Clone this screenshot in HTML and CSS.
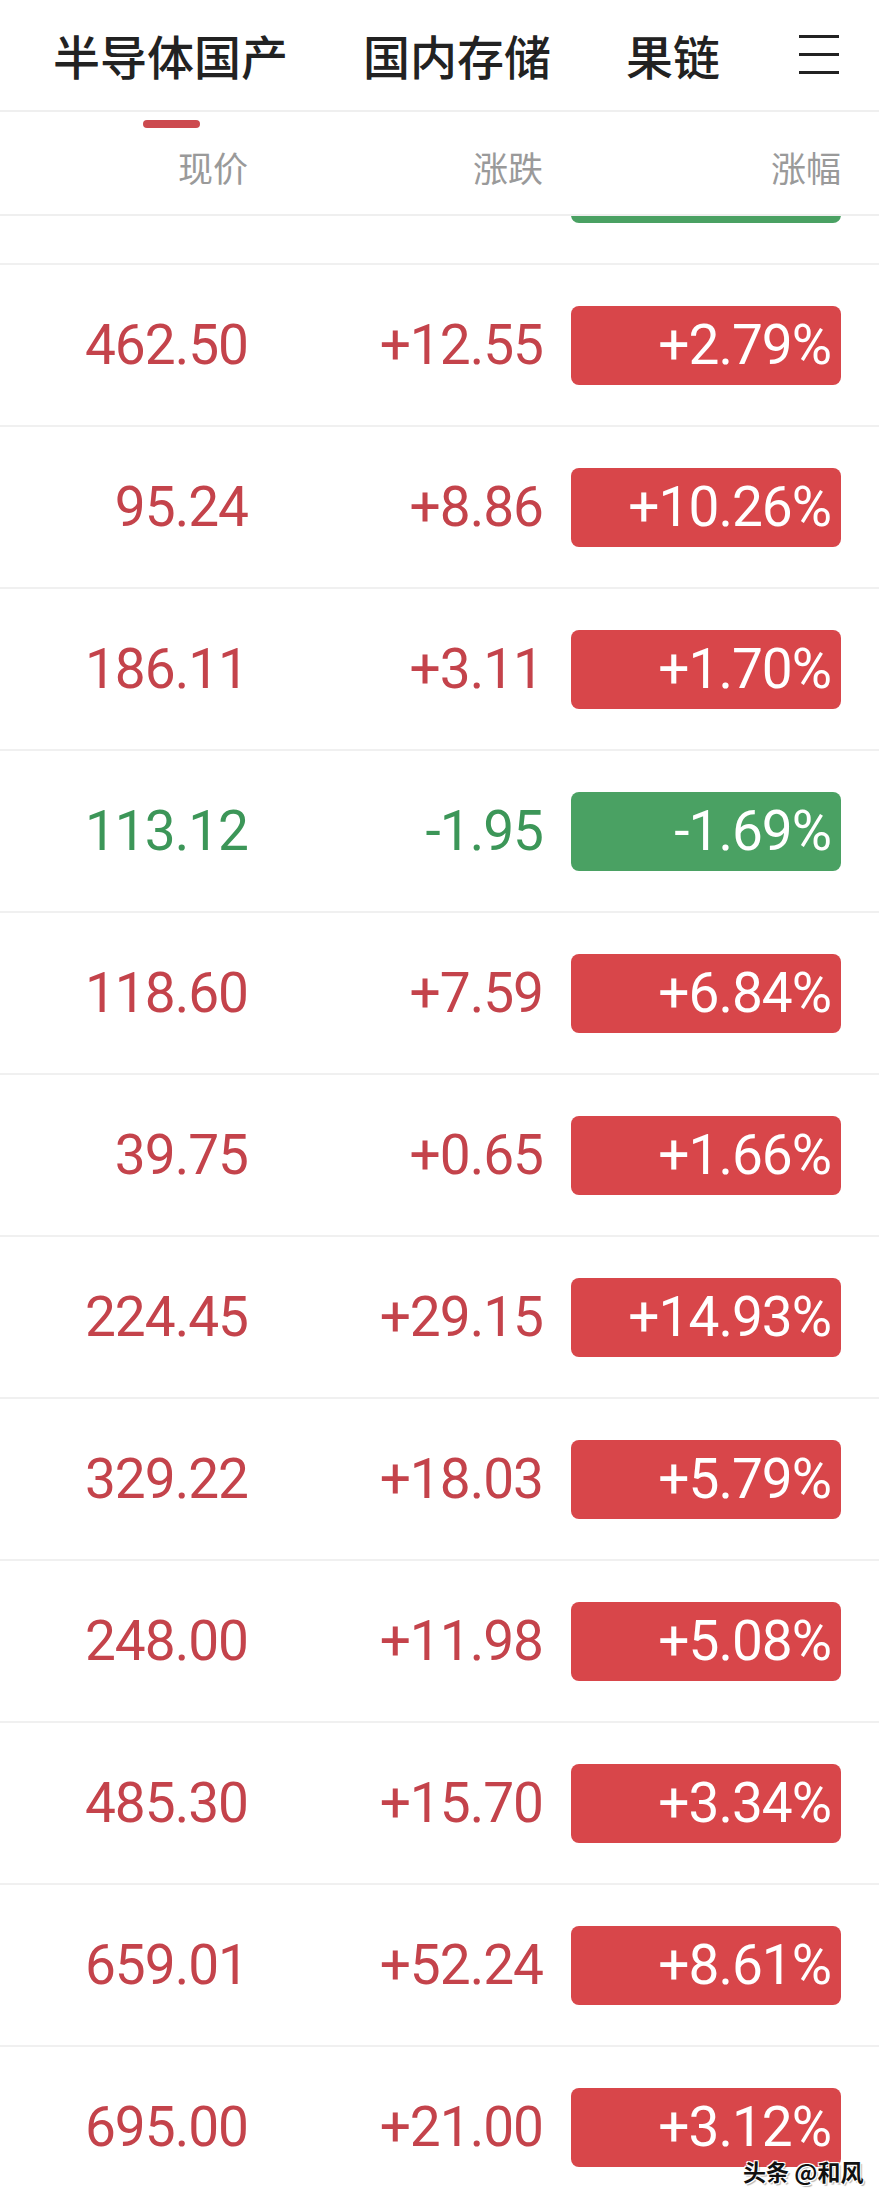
FILE: index.html
```html
<!DOCTYPE html>
<html lang="zh-CN">
<head>
<meta charset="utf-8">
<title>半导体国产</title>
<link rel="stylesheet" href="styles.css">
</head>
<body>
<div class="page">
  <nav class="tabs">
    <div class="tab active">半导体国产</div>
    <div class="tab">国内存储</div>
    <div class="tab">果链</div>
    <div class="menu">
      <svg width="40" height="42" viewBox="0 0 40 42"><rect x="0" y="2" width="40" height="3" fill="#222"/><rect x="0" y="20" width="40" height="3" fill="#222"/><rect x="0" y="38" width="40" height="3" fill="#222"/></svg>
    </div>
  </nav>
  <div class="head">
    <div class="hcell">现价</div>
    <div class="hcell">涨跌</div>
    <div class="hcell">涨幅</div>
  </div>
  <div class="clip">
    <div class="row down"><div class="price"></div><div class="chg"></div><div class="badge"></div></div>
  </div>
  <div class="list">
    <div class="row up"><div class="price">462.50</div><div class="chg">+12.55</div><div class="badge">+2.79%</div></div>
    <div class="row up"><div class="price">95.24</div><div class="chg">+8.86</div><div class="badge">+10.26%</div></div>
    <div class="row up"><div class="price">186.11</div><div class="chg">+3.11</div><div class="badge">+1.70%</div></div>
    <div class="row down"><div class="price">113.12</div><div class="chg">-1.95</div><div class="badge">-1.69%</div></div>
    <div class="row up"><div class="price">118.60</div><div class="chg">+7.59</div><div class="badge">+6.84%</div></div>
    <div class="row up"><div class="price">39.75</div><div class="chg">+0.65</div><div class="badge">+1.66%</div></div>
    <div class="row up"><div class="price">224.45</div><div class="chg">+29.15</div><div class="badge">+14.93%</div></div>
    <div class="row up"><div class="price">329.22</div><div class="chg">+18.03</div><div class="badge">+5.79%</div></div>
    <div class="row up"><div class="price">248.00</div><div class="chg">+11.98</div><div class="badge">+5.08%</div></div>
    <div class="row up"><div class="price">485.30</div><div class="chg">+15.70</div><div class="badge">+3.34%</div></div>
    <div class="row up"><div class="price">659.01</div><div class="chg">+52.24</div><div class="badge">+8.61%</div></div>
    <div class="row up"><div class="price">695.00</div><div class="chg">+21.00</div><div class="badge">+3.12%</div></div>
  </div>
  <div class="mark">头条 @和风</div>
</div>
</body>
</html>
```
FILE: styles.css
```css
* { box-sizing: border-box; }
html, body { margin: 0; padding: 0; background: #fff; }
body { width: 879px; height: 2205px; overflow: hidden; }
.page {
  position: relative;
  width: 879px;
  height: 2205px;
  overflow: hidden;
  font-family: "Noto Sans CJK SC", "Noto Sans", sans-serif;
}
.tabs {
  display: flex;
  align-items: center;
  gap: 75px;
  height: 112px;
  padding: 0 40px 2px 53px;
  border-bottom: 2px solid #efefef;
}
.tab {
  position: relative;
  font-size: 47px;
  font-weight: 500;
  line-height: 1;
  color: #222;
  white-space: nowrap;
}
.tab.active::after {
  content: "";
  position: absolute;
  left: 50%;
  bottom: -50px;
  width: 57px;
  height: 8px;
  margin-left: -28px;
  border-radius: 4px;
  background: #cc4a4f;
}
.menu { margin-left: auto; display: flex; align-items: center; }
.menu svg { display: block; }

.head, .row {
  display: grid;
  grid-template-columns: 248px 295px 1fr;
  padding-right: 38px;
}
.head {
  height: 104px;
  align-items: center;
  padding-top: 6px;
  border-bottom: 2px solid #efefef;
}
.hcell {
  text-align: right;
  font-size: 35px;
  line-height: 1;
  color: #9a9a9a;
}
.clip {
  height: 47px;
  overflow: hidden;
  display: flex;
  flex-direction: column;
  justify-content: flex-end;
}
.clip .row { flex: none; }
.row {
  height: 162px;
  align-items: center;
  border-top: 2px solid #f0f0f0;
  font-family: Roboto, "Liberation Sans", sans-serif;
  font-size: 55px;
  letter-spacing: -1px;
  line-height: 1;
}
.price, .chg { text-align: right; }
.badge {
  justify-self: end;
  width: 270px;
  height: 79px;
  border-radius: 8px;
  display: flex;
  align-items: center;
  justify-content: flex-end;
  padding-right: 10px;
  color: #fff;
}
.up .price, .up .chg { color: #c4434b; }
.up .badge { background: #d8464a; }
.down .price, .down .chg { color: #3c9658; }
.down .badge { background: #4aa163; }

.mark {
  position: absolute;
  left: 743px;
  top: 2160px;
  font-size: 23px;
  line-height: 1;
  font-weight: 700;
  color: #111;
  white-space: nowrap;
  text-shadow: 1px 1px 0 #fff, -1px -1px 0 #fff, 1px -1px 0 #fff, -1px 1px 0 #fff, 2px 2px 1px rgba(0,0,0,0.3);
}
```
